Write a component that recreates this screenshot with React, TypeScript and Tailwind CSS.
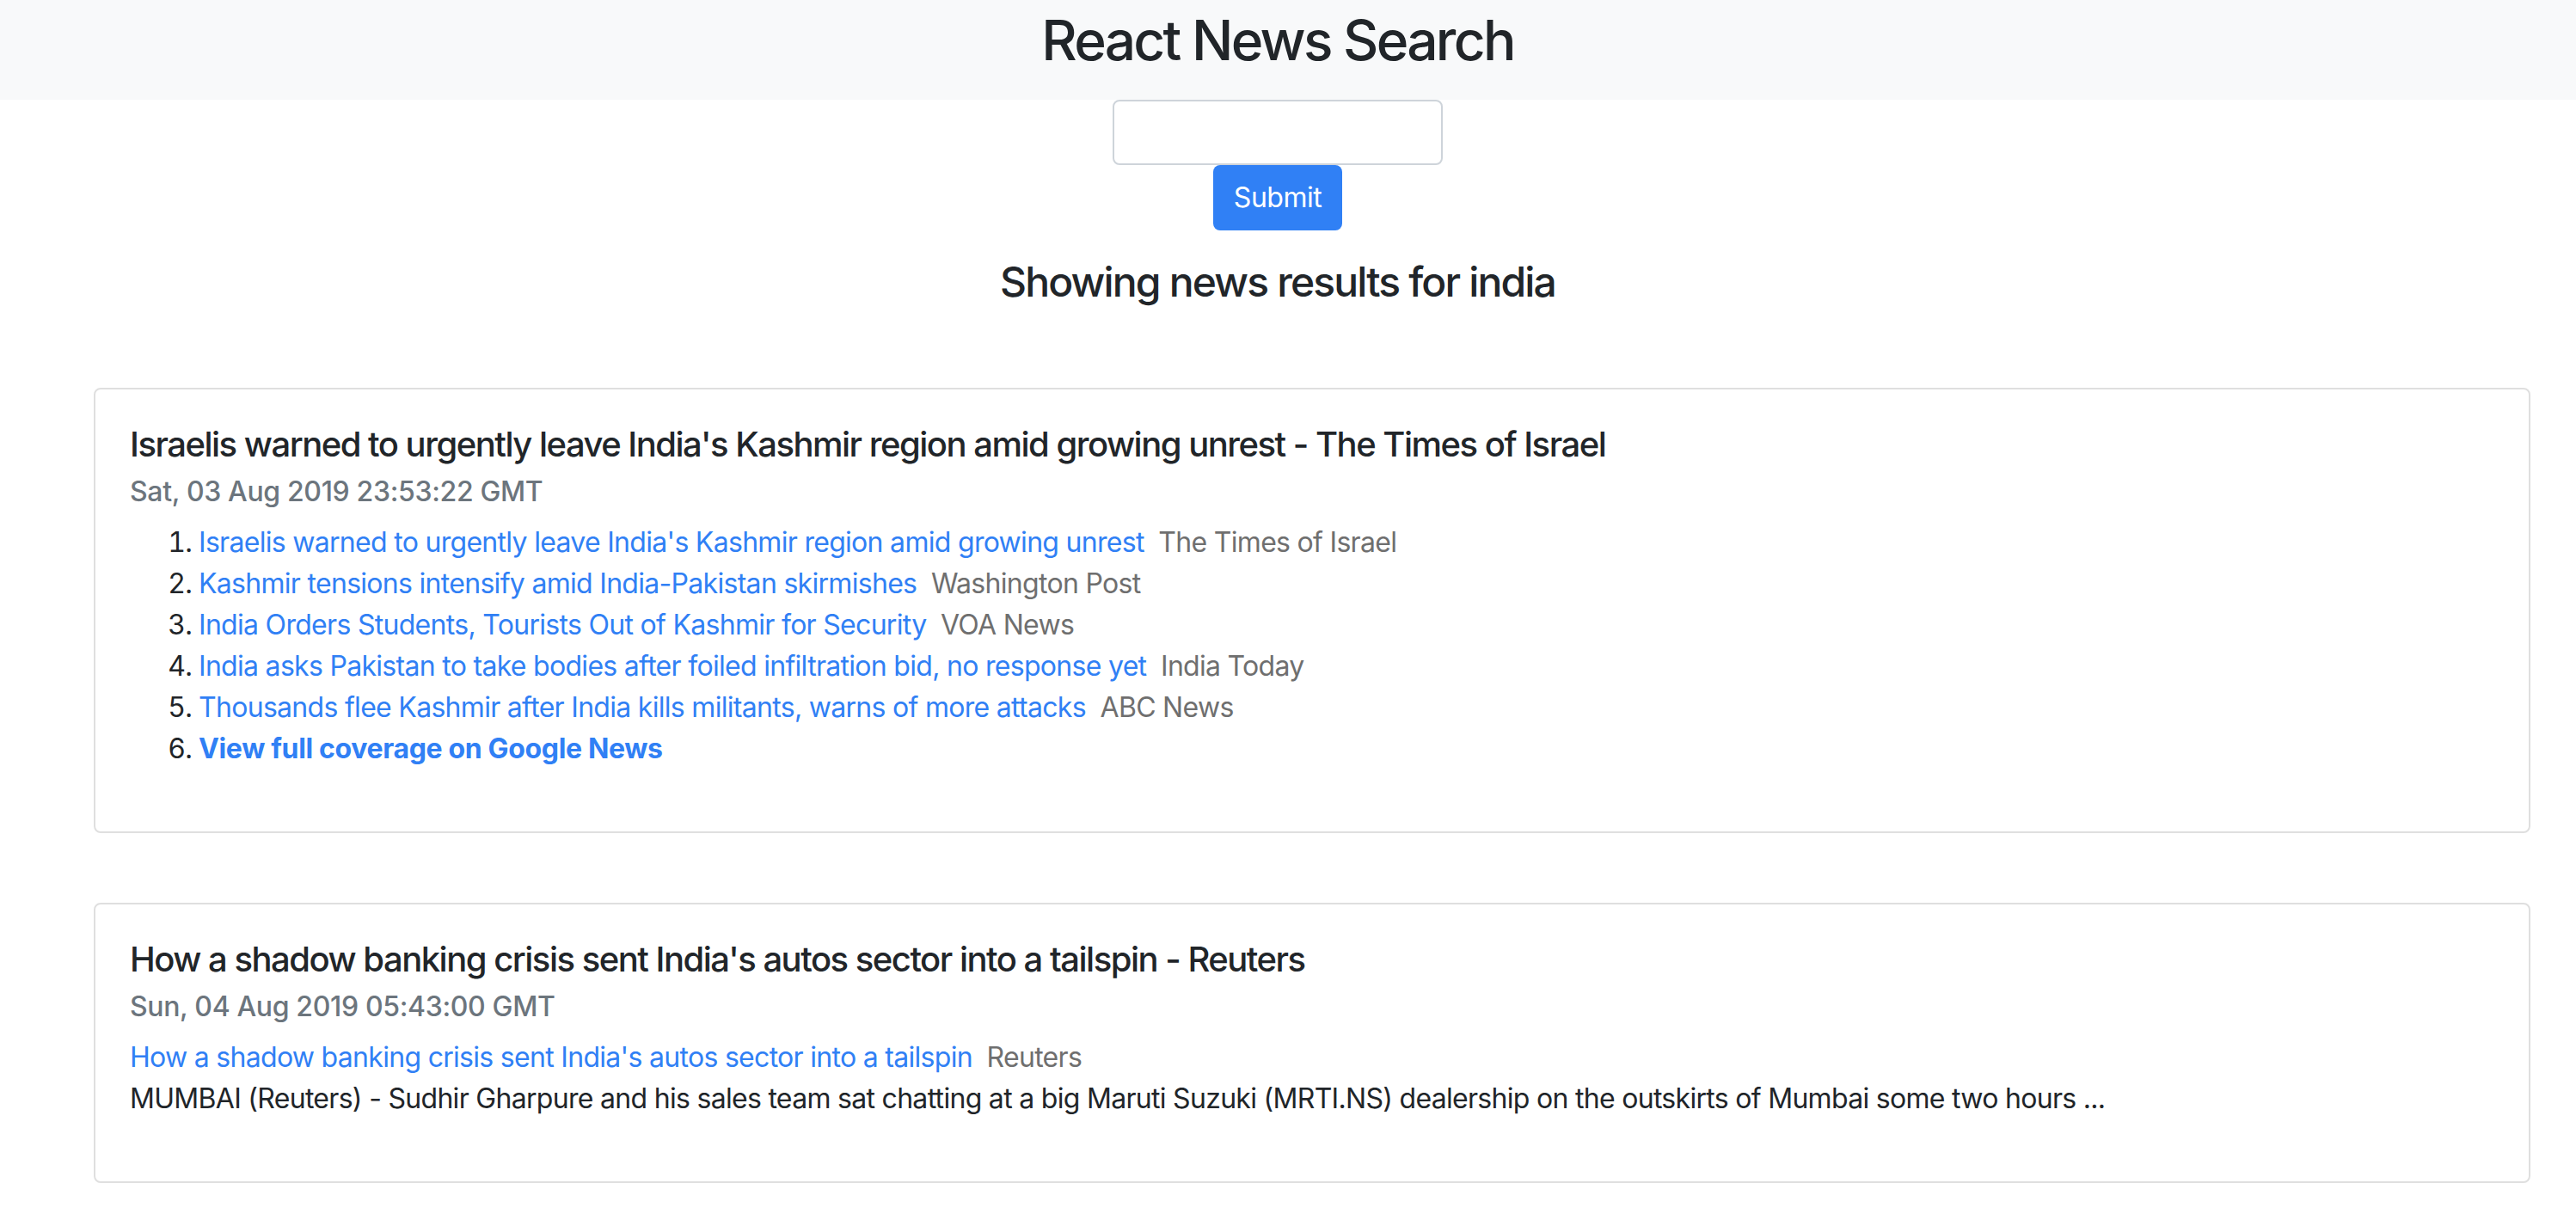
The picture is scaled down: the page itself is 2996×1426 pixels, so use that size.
import React from 'react';

interface Story {
    title: string;
    source: string;
}

const related: Story[] = [
    { title: "Israelis warned to urgently leave India's Kashmir region amid growing unrest", source: 'The Times of Israel' },
    { title: 'Kashmir tensions intensify amid India-Pakistan skirmishes', source: 'Washington Post' },
    { title: 'India Orders Students, Tourists Out of Kashmir for Security', source: 'VOA News' },
    { title: 'India asks Pakistan to take bodies after foiled infiltration bid, no response yet', source: 'India Today' },
    { title: 'Thousands flee Kashmir after India kills militants, warns of more attacks', source: 'ABC News' },
];

const Card: React.FC<{ title: string; date: string; children: React.ReactNode }> = ({ title, date, children }) => (
    <div className="ml-[109px] mr-[53px] border-2 border-[#dfdfdf] rounded-[8px] p-[40px]">
        <h5 className="text-[40px] leading-[48px] font-medium tracking-[-1.5px] mb-[12px]">{title}</h5>
        <h6 className="text-[32px] leading-[38.4px] font-medium tracking-[-0.35px] text-[#6c757d] mb-[16px]">{date}</h6>
        {children}
    </div>
);

export default function App() {
    return (
        <div className="min-h-screen bg-white text-[#212529] font-['Inter',sans-serif] pb-[52px]">
            <div className="h-[116px] bg-[#f8f9fa] pt-[9px] pr-[24px] text-center">
                <h2 className="text-[64px] leading-[76.8px] font-medium tracking-[-2.7px]">React News Search</h2>
            </div>

            <form className="flex flex-col items-center pr-[24px]" onSubmit={(e) => e.preventDefault()}>
                <input
                    type="text"
                    className="w-[384px] h-[76px] border-2 border-[#ced4da] rounded-[8px] px-[24px] text-[32px] outline-none"
                />
                <button type="submit" className="h-[76px] px-[24px] rounded-[8px] bg-[#3080f5] text-white text-[32px] tracking-[-0.5px]">
                    Submit
                </button>
            </form>

            <h4 className="mt-[31px] pr-[24px] text-center text-[48px] leading-[57.6px] font-medium tracking-[-1.85px]">
                Showing news results for india
            </h4>

            <div className="mt-[94px] flex flex-col gap-[81px]">
                <Card
                    title="Israelis warned to urgently leave India's Kashmir region amid growing unrest - The Times of Israel"
                    date="Sat, 03 Aug 2019 23:53:22 GMT"
                >
                    <ol className="list-decimal pl-[80px] mb-[32px] text-[32px] leading-[48px] tracking-[-0.7px]">
                        {related.map((s) => (
                            <li key={s.title}>
                                <a href="#" className="text-[#3080f5]">{s.title}</a>
                                {'\u00a0\u00a0'}
                                <span className="text-[#6f6f6f]">{s.source}</span>
                            </li>
                        ))}
                        <li>
                            <a href="#" className="text-[#3080f5] font-bold tracking-[-0.35px]">View full coverage on Google News</a>
                        </li>
                    </ol>
                </Card>

                <Card
                    title="How a shadow banking crisis sent India's autos sector into a tailspin - Reuters"
                    date="Sun, 04 Aug 2019 05:43:00 GMT"
                >
                    <div className="text-[32px] leading-[48px] tracking-[-0.7px]">
                        <a href="#" className="text-[#3080f5]">How a shadow banking crisis sent India's autos sector into a tailspin</a>
                        {'\u00a0\u00a0'}
                        <span className="text-[#6f6f6f]">Reuters</span>
                        <p className="mb-[32px]">
                            MUMBAI (Reuters) - Sudhir Gharpure and his sales team sat chatting at a big Maruti Suzuki (MRTI.NS) dealership on the outskirts of Mumbai some two hours ...
                        </p>
                    </div>
                </Card>
            </div>
        </div>
    );
}
